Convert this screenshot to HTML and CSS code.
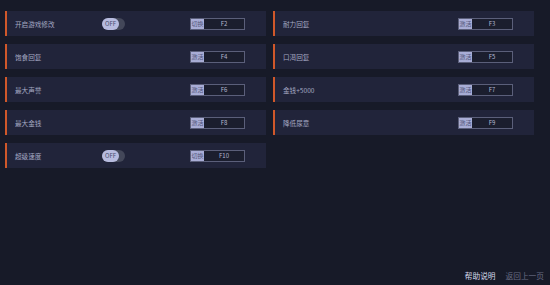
FILE: index.html
```html
<!DOCTYPE html>
<html lang="zh">
<head>
<meta charset="utf-8">
<link rel="stylesheet" href="styles.css">
</head>
<body>
<div class="page">
  <div class="grid">
    <div class="row"><span class="label">开启游戏修改</span><span class="toggle"><span class="knob">OFF</span></span><span class="key"><span class="tag">切换</span><span class="code">F2</span></span></div>
    <div class="row"><span class="label">耐力回复</span><span class="key"><span class="tag">激活</span><span class="code">F3</span></span></div>
    <div class="row"><span class="label">饱食回复</span><span class="key"><span class="tag">激活</span><span class="code">F4</span></span></div>
    <div class="row"><span class="label">口渴回复</span><span class="key"><span class="tag">激活</span><span class="code">F5</span></span></div>
    <div class="row"><span class="label">最大声誉</span><span class="key"><span class="tag">激活</span><span class="code">F6</span></span></div>
    <div class="row"><span class="label">金钱+5000</span><span class="key"><span class="tag">激活</span><span class="code">F7</span></span></div>
    <div class="row"><span class="label">最大金钱</span><span class="key"><span class="tag">激活</span><span class="code">F8</span></span></div>
    <div class="row"><span class="label">降低尿意</span><span class="key"><span class="tag">激活</span><span class="code">F9</span></span></div>
    <div class="row"><span class="label">超级速度</span><span class="toggle"><span class="knob">OFF</span></span><span class="key"><span class="tag">切换</span><span class="code">F10</span></span></div>
  </div>
  <div class="footer">
    <span class="help">帮助说明</span>
    <span class="back">返回上一页</span>
  </div>
</div>
</body>
</html>
```
FILE: styles.css
```css
html, body {
  margin: 0;
  padding: 0;
  background: #171a28;
}
.page {
  width: 550px;
  height: 285px;
  box-sizing: border-box;
  padding: 11px 0 0 5px;
  display: flex;
  flex-direction: column;
  font-family: "Noto Sans CJK SC", "Noto Sans", sans-serif;
}
.grid {
  display: grid;
  grid-template-columns: 261px 261px;
  column-gap: 7px;
  row-gap: 8px;
}
.row {
  height: 25px;
  box-sizing: border-box;
  background: #21243a;
  border-left: 2px solid #d0582a;
  display: flex;
  align-items: center;
  padding-left: 8px;
  padding-right: 21px;
}
.label {
  width: 87px;
  font-size: 6.6px;
  color: #a4a8c2;
  white-space: nowrap;
}
.toggle {
  width: 23px;
  height: 12px;
  border-radius: 6px;
  background: #434759;
  display: flex;
  align-items: center;
}
.knob {
  width: 17px;
  height: 12px;
  border-radius: 6px;
  background: #b7bbdf;
  color: #4a4e6e;
  font-size: 6px;
  line-height: 12px;
  text-align: center;
}
.key {
  margin-left: auto;
  width: 55px;
  height: 12px;
  box-sizing: border-box;
  border: 1px solid #5b5f7a;
  background: #1b1e2e;
  display: flex;
  align-items: stretch;
}
.tag {
  width: 13px;
  background: #a9add6;
  color: #4f5478;
  font-size: 6px;
  line-height: 10px;
  text-align: center;
  white-space: nowrap;
  overflow: hidden;
}
.code {
  flex: 1;
  color: #b4b8d0;
  font-size: 6px;
  line-height: 10px;
  text-align: center;
}
.footer {
  margin-top: auto;
  display: flex;
  justify-content: flex-end;
  gap: 10px;
  padding: 0 6px 3px 0;
  font-size: 7.7px;
  line-height: 12px;
}
.help {
  color: #d6d8e8;
}
.back {
  color: #686c84;
}
```
